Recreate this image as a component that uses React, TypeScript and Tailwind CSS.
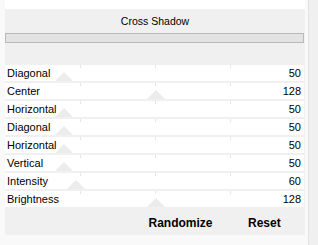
const rows = [
  { label: "Diagonal", value: 50 },
  { label: "Center", value: 128 },
  { label: "Horizontal", value: 50 },
  { label: "Diagonal", value: 50 },
  { label: "Horizontal", value: 50 },
  { label: "Vertical", value: 50 },
  { label: "Intensity", value: 60 },
  { label: "Brightness", value: 128 },
];

function SliderRow({ label, value }: { label: string; value: number }) {
  const x = (value / 255) * 300;
  return (
    <div className="relative h-[16px] w-[299px] bg-white mb-[2px] flex items-center justify-between">
      {[75, 150, 225].map((t) => (
        <div key={t} className="absolute top-0 w-px h-[3px] bg-[#e6e6e6]" style={{ left: t }} />
      ))}
      <svg className="absolute bottom-0" width="18" height="9" viewBox="0 0 18 9" style={{ left: x - 9 }}>
        <polygon points="0,9 9,0 18,9" fill="#ececec" />
      </svg>
      <span className="relative pl-[2px] leading-[16px]">{label}</span>
      <span className="relative pr-[3px] leading-[16px]">{value}</span>
    </div>
  );
}

export default function App() {
  return (
    <div className="w-[318px] h-[245px] flex bg-[#f9f9f9] text-[11px] text-black overflow-hidden font-['Liberation_Sans',Arial,sans-serif]">
      <div className="w-[5px] shrink-0" />
      <div className="w-[300px] shrink-0 flex flex-col">
        <div className="h-[9px] bg-white" />
        <div className="h-[56px] bg-[#f0f0f0]">
          <div className="h-[24px] leading-[25px] text-center text-[10.5px]">Cross Shadow</div>
          <div className="h-[10px] w-[299px] border border-[#b9b9b9] bg-[#e3e3e3]" />
        </div>
        <div className="bg-[#f0f0f0]">
          {rows.map((r, i) => (
            <SliderRow key={i} label={r.label} value={r.value} />
          ))}
        </div>
        <div className="h-[28px] -mt-[2px] bg-[#f0f0f0] flex pt-[8px] text-[12px] font-bold leading-[17px]">
          <div className="w-[136px] shrink-0" />
          <div className="w-[79px] shrink-0 text-center">Randomize</div>
          <div className="w-[85px] shrink-0 pl-[28px]">Reset</div>
        </div>
      </div>
      <div className="w-[3px] shrink-0" />
      <div className="w-px shrink-0 bg-[#e2e2e2]" />
      <div className="w-[9px] shrink-0 bg-[#f0f0f0]" />
    </div>
  );
}
